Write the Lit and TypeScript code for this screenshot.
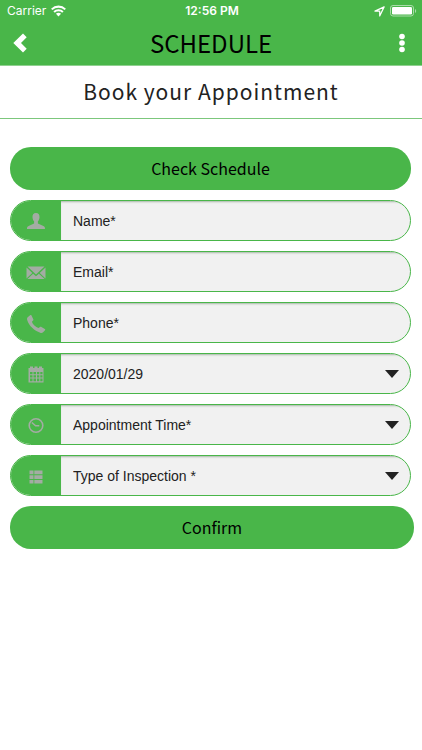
import { LitElement, html, svg, css } from "lit";
import { customElement, property } from "lit/decorators.js";

const icons = {
  user: svg`<path d="M10 1C7.400 1 6.200 2.900 6.500 5.400c.2 1.800.8 3 1.600 3.900v2.200L2.600 14C1.400 14.600 1 15.200 1 17h18c0-1.800-.4-2.400-1.600-3l-5.500-2.500V9.300c.8-.9 1.400-2.100 1.600-3.900C13.800 2.900 12.600 1 10 1z"/>`,
  mail: svg`<path d="M1.500 3.500h17L10 11.500zM.5 4.500l5.800 5.500L.5 15.600zM19.500 4.500v11.100L13.700 10zM7.100 10.800L10 13.300l2.900-2.500 5.700 5.200H1.400z"/>`,
  phone: svg`<path d="M1.700 3.200L4.100 1.300c.5-.4 1.100-.3 1.400.2l1.800 3.700c.3.500.2 1-.3 1.400L5.900 7.800c.8 2.700 3.700 5.400 6.600 6.300l1.500-1.100c.4-.4.900-.4 1.400-.1l3.400 2c.5.300.6.900.2 1.400l-1.900 1.900c-.7.700-1.800.9-2.900.5C8.500 16.700 3 12 1.200 6c-.3-1.100-.2-2.100.5-2.800z"/>`,
  calendar: svg`<path fill-rule="evenodd" d="M3 3h1V1.500h3V3h1.500V1.500h3V3H13V1.500h3V3h1.500v14.500h-15V3zm1 4v2.200h2.500V7zm3.500 0v2.200H10V7zM11 7v2.200h2.300V7zm3.300 0v2.200h2.200V7zM4 10.200v2.400h2.500v-2.400zm3.500 0v2.400H10v-2.400zm3.500 0v2.400h2.300v-2.400zm3.300 0v2.400h2.200v-2.400zM4 13.600v2.700h2.500v-2.700zm3.500 0v2.700H10v-2.700zm3.500 0v2.700h2.300v-2.700zm3.300 0v2.700h2.200v-2.700z"/>`,
  clock: svg`<g fill="none" stroke="currentColor" stroke-width="1.600"><circle cx="10" cy="9.500" r="6.800"/><path d="M5.800 6.500L9.600 9.800H13.300"/></g>`,
  list: svg`<path d="M3.500 3.500h4v3.700h-4zM8.300 3.500h8.200v3.700H8.300zM3.500 8.200h4v3.700h-4zM8.300 8.200h8.200v3.700H8.300zM3.500 12.900h4v3.600h-4zM8.300 12.900h8.200v3.600H8.300z"/>`,
};

type IconName = keyof typeof icons;

interface Field {
  id: string;
  label: string;
  icon: IconName;
  kind: "text" | "email" | "tel" | "select";
}

const fields: Field[] = [
  { id: "name", label: "Name*", icon: "user", kind: "text" },
  { id: "email", label: "Email*", icon: "mail", kind: "email" },
  { id: "phone", label: "Phone*", icon: "phone", kind: "tel" },
  { id: "date", label: "2020/01/29", icon: "calendar", kind: "select" },
  { id: "time", label: "Appointment Time*", icon: "clock", kind: "select" },
  { id: "type", label: "Type of Inspection *", icon: "list", kind: "select" },
];

@customElement("form-field")
export class FormField extends LitElement {
  @property({ attribute: false }) field!: Field;

  static styles = css`
    :host {
      display: block;
    }
    .field {
      display: flex;
      box-sizing: border-box;
      height: 41px;
      border: 1px solid #49b649;
      border-radius: 21px;
      overflow: hidden;
      background: #f1f1f1;
    }
    .badge {
      display: flex;
      align-items: center;
      justify-content: center;
      flex: none;
      width: 50px;
      padding-top: 2px;
      box-sizing: border-box;
      background: #49b649;
      color: #a3aca3;
    }
    .icon {
      width: 20px;
      height: 20px;
      fill: currentColor;
    }
    .entry {
      display: flex;
      position: relative;
      flex: 1;
      min-width: 0;
    }
    .control {
      flex: 1;
      min-width: 0;
      appearance: none;
      margin: 0;
      padding: 0 40px 0 12px;
      border: 0;
      border-radius: 0;
      background: transparent;
      box-shadow: inset 0 2px 2px -1px #a8b8a8;
      color: #222;
      font: 14px/20px "Liberation Sans", Arial, sans-serif;
    }
    .control::placeholder {
      color: #222;
      opacity: 1;
    }
    .arrow {
      position: absolute;
      right: 11px;
      top: 16px;
      width: 14px;
      height: 8px;
      fill: #222;
      pointer-events: none;
    }
  `;

  render() {
    const f = this.field;
    return html`
      <div class="field">
        <label class="badge" for=${f.id} aria-label=${f.label}>
          <svg class="icon" viewBox="0 0 20 20" aria-hidden="true">${icons[f.icon]}</svg>
        </label>
        <div class="entry">
          ${f.kind === "select"
            ? html`<select class="control" id=${f.id}>
                  <option>${f.label}</option>
                </select>
                <svg class="arrow" viewBox="0 0 14 8" aria-hidden="true"><path d="M0 0h14L7 8z" /></svg>`
            : html`<input class="control" id=${f.id} type=${f.kind} placeholder=${f.label} />`}
        </div>
      </div>
    `;
  }
}

@customElement("app-root")
export class AppRoot extends LitElement {
  static styles = css`
    :host {
      display: block;
      min-height: 100vh;
      background: #fff;
      font-family: "Noto Sans CJK SC", "Noto Sans", sans-serif;
    }
    .top {
      background: #49b649;
      border-bottom: 1px solid #8fd08f;
    }
    .status {
      display: grid;
      grid-template-columns: 1fr auto 1fr;
      align-items: center;
      height: 22px;
      padding: 0 5px 0 7px;
      color: #fff;
      font: 12px/22px Inter, Roboto, sans-serif;
    }
    .carrier,
    .power {
      display: flex;
      align-items: center;
      gap: 5px;
    }
    .power {
      justify-content: flex-end;
    }
    .clock {
      font-weight: 600;
    }
    .wifi {
      width: 15px;
      height: 12px;
    }
    .locate {
      width: 11px;
      height: 11px;
    }
    .battery {
      width: 27px;
      height: 12px;
    }
    .bar {
      display: grid;
      grid-template-columns: 40px 1fr 40px;
      align-items: center;
      height: 43px;
    }
    .title {
      margin: 0;
      padding-bottom: 2px;
      text-align: center;
      color: #000;
      font-size: 24px;
      line-height: 40px;
      font-weight: 400;
    }
    .tool {
      display: flex;
      align-items: center;
      justify-content: center;
      height: 40px;
      margin: 0;
      padding: 0 0 2px;
      border: 0;
      background: none;
      color: #fff;
    }
    .back {
      width: 14px;
      height: 20px;
    }
    .dots {
      width: 6px;
      height: 20px;
    }
    .heading {
      margin: 0;
      padding-bottom: 2px;
      border-bottom: 1px solid #7cc77c;
      color: #222;
      font-size: 21px;
      line-height: 50px;
      font-weight: 400;
      letter-spacing: 1px;
      text-align: center;
    }
    .form {
      display: flex;
      flex-direction: column;
      gap: 10px;
      padding: 28px 8px 28px 10px;
    }
    .inset {
      margin-right: 3px;
    }
    .action {
      height: 43px;
      padding: 0 0 2px;
      border: 0;
      border-radius: 21px;
      background: #49b649;
      color: #000;
      font-family: inherit;
      font-size: 16px;
      line-height: 24px;
    }
  `;

  render() {
    return html`
      <header class="top">
        <div class="status">
          <span class="carrier">
            Carrier
            <svg class="wifi" viewBox="0 0 14 11" aria-hidden="true">
              <g fill="none" stroke="#fff" stroke-width="1.900">
                <path d="M.7 4a9 9 0 0 1 12.600 0" />
                <path d="M2.900 6.400a5.900 5.900 0 0 1 8.200 0" />
              </g>
              <path fill="#fff" d="M4.600 8.100a3.300 3.300 0 0 1 4.800 0L7 10.600z" />
            </svg>
          </span>
          <span class="clock">12:56 PM</span>
          <span class="power">
            <svg class="locate" viewBox="0 0 10 10" aria-hidden="true">
              <path d="M9.200.8L.9 4.700h4.300v4.400z" fill="none" stroke="#fff" stroke-width="1.100" stroke-linejoin="round" />
            </svg>
            <svg class="battery" viewBox="0 0 27 12" aria-hidden="true">
              <rect x=".5" y=".5" width="23" height="10.500" rx="2.500" fill="none" stroke="#a9dca9" />
              <rect x="2" y="2" width="20" height="7.500" rx="1.300" fill="#fff" />
              <path d="M25 4v4c1.600-.5 1.600-3.500 0-4z" fill="#a9dca9" />
            </svg>
          </span>
        </div>
        <nav class="bar">
          <button class="tool" aria-label="Back">
            <svg class="back" viewBox="0 0 14 20" aria-hidden="true">
              <path d="M10 .5l3.700 3.700L8 10l5.700 5.800L10 19.500.3 10z" fill="currentColor" />
            </svg>
          </button>
          <h1 class="title">SCHEDULE</h1>
          <button class="tool" aria-label="Menu">
            <svg class="dots" viewBox="0 0 6 20" aria-hidden="true">
              <g fill="currentColor">
                <circle cx="3" cy="3.500" r="2.800" />
                <circle cx="3" cy="10" r="2.800" />
                <circle cx="3" cy="16.500" r="2.800" />
              </g>
            </svg>
          </button>
        </nav>
      </header>
      <main>
        <h2 class="heading">Book your Appointment</h2>
        <form class="form" @submit=${(e: Event) => e.preventDefault()}>
          <button class="action inset" type="button">Check Schedule</button>
          ${fields.map((f) => html`<form-field class="inset" .field=${f}></form-field>`)}
          <button class="action" type="submit">Confirm</button>
        </form>
      </main>
    `;
  }
}
